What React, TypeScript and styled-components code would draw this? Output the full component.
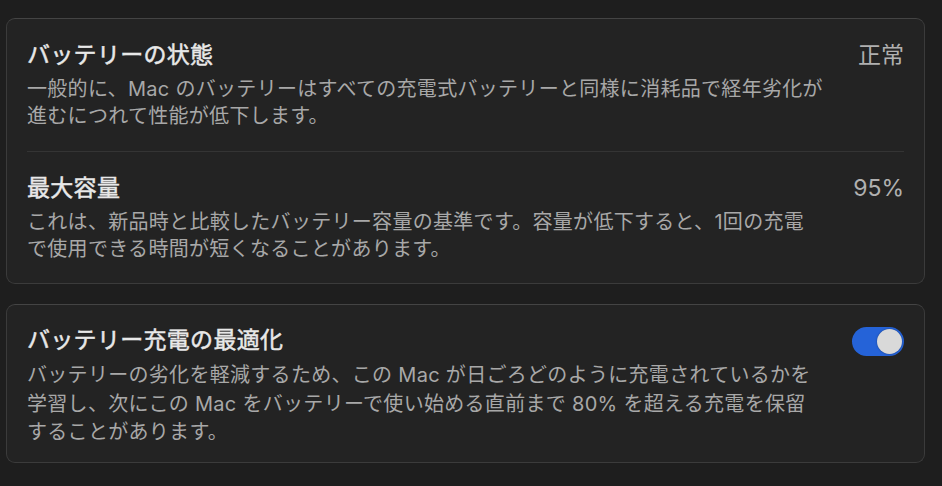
import React from "react";
import styled, { createGlobalStyle } from "styled-components";

const Global = createGlobalStyle`
  html, body { margin: 0; padding: 0; background: #1e1e1e; }
  body {
    font-family: "Inter", "Noto Sans CJK JP", "Noto Sans", sans-serif;
    -webkit-font-smoothing: antialiased;
  }
`;

const Page = styled.div`
  width: 942px;
  height: 486px;
  box-sizing: border-box;
  padding: 18px 17px 0 6px;
  display: flex;
  flex-direction: column;
  gap: 20px;
  background: #1e1e1e;
`;

const Card = styled.section`
  background: #232323;
  border: 1px solid #3b3b3b;
  border-top-color: #444444;
  border-radius: 9px;
  padding: 0 20px;
  display: flex;
  flex-direction: column;
`;

const Row = styled.div<{ $divider?: boolean; $top?: number; $bottom?: number }>`
  display: flex;
  justify-content: space-between;
  align-items: flex-start;
  padding: ${(p) => p.$top ?? 21}px 0 ${(p) => p.$bottom ?? 21}px;
  border-bottom: ${(p) => (p.$divider ? "1px solid #343434" : "none")};
`;

const Text = styled.div`
  display: flex;
  flex-direction: column;
  gap: 6px;
`;

const Title = styled.div`
  font-size: 23px;
  line-height: 30px;
  font-weight: 400;
  -webkit-text-stroke: 0.5px #e8e8e8;
  color: #e8e8e8;
  letter-spacing: 0.3px;
`;

const Desc = styled.div<{ $lh?: number }>`
  font-size: 20px;
  line-height: ${(p) => p.$lh ?? 27}px;
  color: #a8a8a8;
  white-space: nowrap;
  letter-spacing: 0.3px;
`;

const Value = styled.div`
  font-size: 23px;
  line-height: 30px;
  color: #b0b0b0;
`;

const Toggle = styled.div<{ $on: boolean }>`
  margin-top: 2px;
  width: 52px;
  height: 29px;
  border-radius: 15px;
  background: ${(p) => (p.$on ? "#2563d8" : "#444")};
  display: flex;
  align-items: center;
  justify-content: ${(p) => (p.$on ? "flex-end" : "flex-start")};
  padding: 0 2px;
  box-sizing: border-box;
`;

const Knob = styled.div`
  width: 25px;
  height: 25px;
  border-radius: 50%;
  background: #d9d9d9;
  box-shadow: 0 0 2px rgba(0, 0, 0, 0.4);
`;

export default function App() {
  return (
    <>
      <Global />
      <Page>
        <Card>
          <Row $divider $bottom={21}>
            <Text>
              <Title>バッテリーの状態</Title>
              <Desc>
                一般的に、Mac のバッテリーはすべての充電式バッテリーと同様に消耗品で経年劣化が
                <br />
                進むにつれて性能が低下します。
              </Desc>
            </Text>
            <Value>正常</Value>
          </Row>
          <Row $bottom={20}>
            <Text>
              <Title>最大容量</Title>
              <Desc>
                これは、新品時と比較したバッテリー容量の基準です。容量が低下すると、1回の充電
                <br />
                で使用できる時間が短くなることがあります。
              </Desc>
            </Text>
            <Value>95%</Value>
          </Row>
        </Card>
        <Card>
          <Row $top={20} $bottom={15}>
            <Text>
              <Title>バッテリー充電の最適化</Title>
              <Desc $lh={28.5}>
                バッテリーの劣化を軽減するため、この Mac が日ごろどのように充電されているかを
                <br />
                学習し、次にこの Mac をバッテリーで使い始める直前まで 80% を超える充電を保留
                <br />
                することがあります。
              </Desc>
            </Text>
            <Toggle $on>
              <Knob />
            </Toggle>
          </Row>
        </Card>
      </Page>
    </>
  );
}
